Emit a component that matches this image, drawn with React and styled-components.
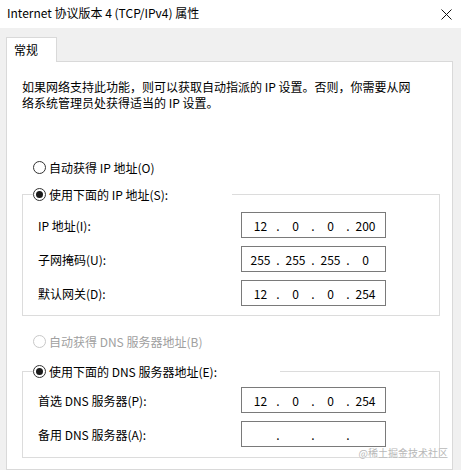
import styled, { createGlobalStyle } from "styled-components";

const GlobalStyle = createGlobalStyle`
    html, body {
        margin: 0;
        padding: 0;
        background: #f0f0f0;
        overflow: hidden;
    }
    body {
        font-family: "Noto Sans CJK SC", "Noto Sans", sans-serif;
        font-size: 12px;
        color: #000;
    }
`;

const Window = styled.div`
    position: relative;
    width: 461px;
    height: 470px;
    display: flex;
    flex-direction: column;
    background: #f0f0f0;
    overflow: hidden;
`;

const TitleBar = styled.div`
    height: 28px;
    flex-shrink: 0;
    display: flex;
    align-items: center;
    justify-content: space-between;
    padding: 0 9px 0 7px;
    background: #fff;
    box-sizing: border-box;
`;

const Title = styled.span`
    font-size: 12px;
    line-height: 16px;
    margin-top: -2px;
`;

const Body = styled.div`
    flex: 1;
    display: flex;
    flex-direction: column;
    padding: 9px 8px 0 6px;
`;

const Tab = styled.div`
    position: relative;
    z-index: 1;
    width: 51px;
    height: 25px;
    box-sizing: border-box;
    margin-bottom: -1px;
    padding-left: 7px;
    line-height: 24px;
    background: #fff;
    border: 1px solid #d9d9d9;
    border-bottom: none;
`;

const Panel = styled.div`
    flex: 1;
    width: 447px;
    box-sizing: border-box;
    padding: 17px 0 0 15px;
    background: #fff;
    border: 1px solid #d9d9d9;
`;

const Description = styled.p`
    margin: 0;
    line-height: 16px;
`;

const Option = styled.div`
    display: flex;
    align-items: center;
    gap: 3px;
    height: 16px;
    margin: ${(p) => p.$margin || "0"};
    color: ${(p) => (p.$disabled ? "#a0a0a0" : "#000")};
    white-space: nowrap;
`;

const Circle = styled.span`
    position: relative;
    width: 13px;
    height: 13px;
    box-sizing: border-box;
    border-radius: 50%;
    border: 1px solid ${(p) => (p.$disabled ? "#c8c8c8" : "#333")};
    background: #fff;
    flex-shrink: 0;

    &::after {
        content: "";
        display: ${(p) => (p.$checked ? "block" : "none")};
        position: absolute;
        left: 2px;
        top: 2px;
        width: 7px;
        height: 7px;
        border-radius: 50%;
        background: #1a1a1a;
    }
`;

const Group = styled.fieldset`
    width: 418px;
    box-sizing: border-box;
    margin: ${(p) => p.$margin};
    padding: ${(p) => p.$pad};
    border: 1px solid #dcdcdc;
    display: flex;
    flex-direction: column;
    gap: 8px;
`;

const Legend = styled.legend`
    width: ${(p) => p.$width}px;
    margin-left: 10px;
    padding: 0;
    background: #fff;
`;

const Row = styled.div`
    display: flex;
    align-items: center;
    height: 26px;
`;

const Label = styled.span`
    width: 218px;
    box-sizing: border-box;
    padding-left: 15px;
    flex-shrink: 0;
`;

const IpBox = styled.div`
    width: 145px;
    height: 26px;
    box-sizing: border-box;
    border: 1px solid #7a7a7a;
    display: flex;
    align-items: center;
    padding-left: 4px;
`;

const Segment = styled.span`
    width: 29px;
    text-align: center;
    flex-shrink: 0;
`;

const Dot = styled.span`
    width: 6px;
    text-align: center;
    flex-shrink: 0;
`;

const Watermark = styled.span`
    position: absolute;
    right: 13px;
    bottom: 11px;
    font-size: 10px;
    line-height: 13px;
    color: #b8b8b8;
    text-shadow: 0 0 1px #fff;
`;

const Radio = ({ checked, disabled, children, margin }) => (
    <Option $disabled={disabled} $margin={margin}>
        <Circle $checked={checked} $disabled={disabled} />
        {children}
    </Option>
);

const IpField = ({ value }) => {
    const parts = value ? value.split(".") : ["", "", "", ""];
    return (
        <IpBox>
            {parts.map((part, i) => (
                <span key={i} style={{ display: "contents" }}>
                    {i > 0 && <Dot>.</Dot>}
                    <Segment>{part}</Segment>
                </span>
            ))}
        </IpBox>
    );
};

const App = () => {
    return (
        <Window>
            <GlobalStyle />
            <TitleBar>
                <Title>Internet 协议版本 4 (TCP/IPv4) 属性</Title>
                <svg width="11" height="11" viewBox="0 0 11 11">
                    <path d="M0.5 0.5 L10.5 10.5 M10.5 0.5 L0.5 10.5" stroke="#111" strokeWidth="1" fill="none" />
                </svg>
            </TitleBar>
            <Body>
                <Tab>常规</Tab>
                <Panel>
                    <Description>
                        如果网络支持此功能，则可以获取自动指派的 IP 设置。否则，你需要从网
                        <br />
                        络系统管理员处获得适当的 IP 设置。
                    </Description>

                    <Radio margin="48px 0 0 11px">自动获得 IP 地址(O)</Radio>

                    <Group $margin="11px 0 0 0" $pad="10px 0 9px 0">
                        <Legend $width={199}>
                            <Radio checked>使用下面的 IP 地址(S):</Radio>
                        </Legend>
                        <Row>
                            <Label>IP 地址(I):</Label>
                            <IpField value="12.0.0.200" />
                        </Row>
                        <Row>
                            <Label>子网掩码(U):</Label>
                            <IpField value="255.255.255.0" />
                        </Row>
                        <Row>
                            <Label>默认网关(D):</Label>
                            <IpField value="12.0.0.254" />
                        </Row>
                    </Group>

                    <Radio disabled margin="17px 0 0 11px">自动获得 DNS 服务器地址(B)</Radio>

                    <Group $margin="14px 0 0 0" $pad="8px 0 10px 0">
                        <Legend $width={247}>
                            <Radio checked>使用下面的 DNS 服务器地址(E):</Radio>
                        </Legend>
                        <Row>
                            <Label>首选 DNS 服务器(P):</Label>
                            <IpField value="12.0.0.254" />
                        </Row>
                        <Row>
                            <Label>备用 DNS 服务器(A):</Label>
                            <IpField />
                        </Row>
                    </Group>
                </Panel>
            </Body>
            <Watermark>@稀土掘金技术社区</Watermark>
        </Window>
    );
};

export default App;
